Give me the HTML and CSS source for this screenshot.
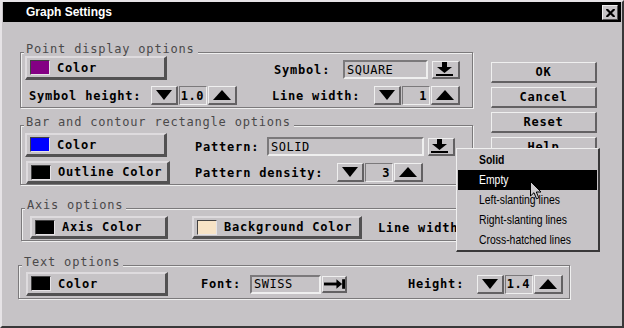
FILE: index.html
```html
<!DOCTYPE html>
<html lang="en">
<head>
    <meta charset="UTF-8">
    <meta name="viewport" content="width=device-width, initial-scale=1.0">
    <title>Graph Settings</title>
    <link rel="stylesheet" href="styles.css">
</head>
<body>
    <div class="window">
        <div class="titlebar">
            <span class="title">Graph Settings</span>
            <button class="close-btn">
                <svg width="9" height="8" viewBox="0 0 9 8"><path d="M0.5 0 L8.5 8 M8.5 0 L0.5 8" stroke="#000" stroke-width="2.2"/></svg>
            </button>
        </div>

        <div class="content">
            <!-- Point display -->
            <div class="group group-point">
                <span class="group-title">Point display options</span>
                <div class="point-grid">
                    <button class="color-btn"><span class="swatch purple"></span>Color</button>
                    <div class="cell cell-low">
                        <span class="lbl lbl-symbol">Symbol:</span>
                        <div class="field field-symbol">SQUARE</div>
                        <button class="icon-btn dd-btn">
                            <svg width="17" height="14" viewBox="0 0 17 14"><rect x="6" y="0" width="5" height="5"/><polygon points="1,5 16,5 8.5,11"/><rect x="0" y="12" width="17" height="2"/></svg>
                        </button>
                    </div>
                    <div class="cell">
                        <span class="lbl lbl-height">Symbol height:</span>
                        <div class="spin">
                            <button class="spin-btn"><span class="tri-down"></span></button>
                            <div class="spin-val">1.0</div>
                            <button class="spin-btn spin-up"><span class="tri-up"></span></button>
                        </div>
                    </div>
                    <div class="cell">
                        <span class="lbl lbl-width">Line width:</span>
                        <div class="spin">
                            <button class="spin-btn"><span class="tri-down"></span></button>
                            <div class="spin-val">1</div>
                            <button class="spin-btn spin-up"><span class="tri-up"></span></button>
                        </div>
                    </div>
                </div>
            </div>

            <!-- Bar and contour -->
            <div class="group group-bar">
                <span class="group-title">Bar and contour rectangle options</span>
                <div class="bar-grid">
                    <button class="color-btn"><span class="swatch blue"></span>Color</button>
                    <div class="cell cell-low">
                        <span class="lbl lbl-pattern">Pattern:</span>
                        <div class="field field-pattern">SOLID</div>
                        <button class="icon-btn dd-btn">
                            <svg width="17" height="14" viewBox="0 0 17 14"><rect x="6" y="0" width="5" height="5"/><polygon points="1,5 16,5 8.5,11"/><rect x="0" y="12" width="17" height="2"/></svg>
                        </button>
                    </div>
                    <button class="color-btn outline-btn"><span class="swatch black"></span>Outline Color</button>
                    <div class="cell">
                        <span class="lbl lbl-density">Pattern density:</span>
                        <div class="spin">
                            <button class="spin-btn"><span class="tri-down"></span></button>
                            <div class="spin-val">3</div>
                            <button class="spin-btn spin-up"><span class="tri-up"></span></button>
                        </div>
                    </div>
                </div>
            </div>

            <div class="actions">
                <button class="action-btn">OK</button>
                <button class="action-btn">Cancel</button>
                <button class="action-btn">Reset</button>
                <button class="action-btn">Help</button>
            </div>

            <!-- Axis -->
            <div class="group group-axis">
                <span class="group-title">Axis options</span>
                <div class="cell">
                    <button class="color-btn axis-btn"><span class="swatch black"></span>Axis Color</button>
                    <button class="color-btn bg-btn"><span class="swatch cream"></span>Background Color</button>
                    <span class="lbl lbl-axis-width">Line width:</span>
                </div>
            </div>

            <!-- Text -->
            <div class="group group-text">
                <span class="group-title">Text options</span>
                <div class="cell">
                    <button class="color-btn"><span class="swatch black"></span>Color</button>
                    <span class="lbl lbl-font">Font:</span>
                    <div class="field field-font">SWISS</div>
                    <button class="icon-btn arrow-btn">
                        <svg width="22" height="10" viewBox="0 0 22 10"><rect x="0" y="3.5" width="14" height="3"/><polygon points="13,0 19,5 13,10"/><rect x="19" y="0" width="3" height="10"/></svg>
                    </button>
                    <span class="lbl lbl-text-height">Height:</span>
                    <div class="spin">
                        <button class="spin-btn"><span class="tri-down"></span></button>
                        <div class="spin-val">1.4</div>
                        <button class="spin-btn spin-up"><span class="tri-up"></span></button>
                    </div>
                </div>
            </div>
        </div>

        <ul class="menu">
            <li class="bold"><span>Solid</span></li>
            <li class="active"><span>Empty</span></li>
            <li><span>Left-slanting lines</span></li>
            <li><span>Right-slanting lines</span></li>
            <li><span>Cross-hatched lines</span></li>
        </ul>

        <svg class="pointer" width="12" height="19" viewBox="0 0 12 19">
            <path d="M0.5 0.5 L0.5 15 L4 11.7 L6.6 17.8 L8.8 16.8 L6.3 11 L11 11 Z" fill="#cecbce" stroke="#000" stroke-width="1"/>
        </svg>
    </div>
</body>
</html>
```

FILE: styles.css
```css
* {
    margin: 0;
    padding: 0;
    box-sizing: border-box;
}

body {
    width: 624px;
    height: 328px;
    overflow: hidden;
    background-color: #c6c3c6;
    font-family: 'DejaVu Sans Mono', 'Liberation Mono', monospace;
    font-size: 12px;
    color: #000;
}

button {
    font: inherit;
    color: inherit;
    background-color: #c6c3c6;
    cursor: default;
}

.window {
    position: relative;
    width: 624px;
    height: 328px;
    border: 2px solid;
    border-color: #e6e3e6 #393839 #393839 #e6e3e6;
    padding: 0 1px;
}

/* Title bar */
.titlebar {
    height: 20px;
    background-color: #000;
    display: flex;
    align-items: center;
    justify-content: space-between;
    padding: 0 3px 0 23px;
}

.title {
    color: #fff;
    font-family: 'Liberation Sans', Arial, sans-serif;
    font-weight: bold;
    font-size: 12px;
}

.close-btn {
    width: 16px;
    height: 15px;
    margin-top: 1px;
    border: 1px solid;
    border-color: #efefef #525152 #525152 #efefef;
    display: flex;
    align-items: center;
    justify-content: center;
}

/* Layout */
.content {
    display: grid;
    grid-template-columns: 453px 106px;
    column-gap: 18px;
    align-items: start;
    padding: 30px 0 0 17px;
}

.group {
    position: relative;
    border: 1px solid #7b797b;
    box-shadow: inset 1px 1px 0 #efefef, 1px 1px 0 #efefef;
}

.group-title {
    position: absolute;
    top: -11px;
    left: 3px;
    padding: 0 3px 0 2px;
    line-height: 14px;
    background-color: #c6c3c6;
    color: #4a494a;
    letter-spacing: 0.8px;
}

.group-point {
    grid-column: 1;
    grid-row: 1;
    padding: 3px 0 2px 4px;
}

.group-bar {
    grid-column: 1;
    grid-row: 2;
    margin-top: 17px;
    padding: 7px 0 0 4px;
}

.group-axis {
    grid-column: 1 / -1;
    grid-row: 3;
    width: 560px;
    margin: 23px 0 0 1px;
    padding: 7px 0 1px 8px;
}

.group-text {
    grid-column: 1 / -1;
    grid-row: 4;
    width: 552px;
    margin: 24px 0 0 -2px;
    padding: 6px 0 2px 7px;
}

.point-grid {
    display: grid;
    grid-template-columns: 247px 188px;
    row-gap: 6px;
}

.bar-grid {
    display: grid;
    grid-template-columns: 170px 260px;
    row-gap: 4px;
}

.cell {
    display: flex;
    align-items: center;
}

.cell-low {
    align-self: end;
    padding-bottom: 1px;
}

/* Labels */
.lbl {
    font-weight: bold;
    letter-spacing: 0.8px;
    white-space: nowrap;
}

.lbl-symbol { width: 71px; padding-left: 2px; }
.lbl-height { width: 126px; padding-left: 4px; }
.lbl-width { width: 104px; }
.lbl-pattern { width: 75px; }
.lbl-density { width: 142px; }
.lbl-axis-width { margin-left: 16px; }
.lbl-font { margin-left: 33px; width: 49px; }
.lbl-text-height { margin-left: 61px; width: 69px; }

/* Colour buttons */
.color-btn {
    width: 142px;
    height: 24px;
    border-style: solid;
    border-width: 2px 3px 3px 2px;
    border-color: #dedbde #525152 #525152 #dedbde;
    display: flex;
    align-items: center;
    gap: 7px;
    padding-left: 3px;
    font-weight: bold;
    letter-spacing: 0.8px;
    white-space: nowrap;
}

.outline-btn {
    width: 144px;
    height: 23px;
    margin-left: 1px;
}

.axis-btn {
    width: 138px;
    height: 23px;
}

.bg-btn {
    width: 170px;
    height: 23px;
    margin-left: 24px;
}

.swatch {
    width: 20px;
    height: 15px;
    border: 1px solid;
    border-color: #424142 #e6e3e6 #e6e3e6 #424142;
}

.purple { background-color: #840084; }
.blue { background-color: #0000ff; }
.black { background-color: #000; }
.cream { background-color: #f7e3c6; }

/* Text fields */
.field {
    height: 19px;
    border: 2px solid;
    border-color: #7b797b #efefef #efefef #7b797b;
    padding: 0 2px;
    display: flex;
    align-items: center;
    letter-spacing: 0.5px;
}

.field-symbol { width: 85px; }
.field-pattern { width: 163px; }
.field-font { width: 71px; }

.icon-btn {
    height: 18px;
    border-style: solid;
    border-width: 1px 2px 2px 1px;
    border-color: #efefef #636163 #636163 #efefef;
    display: flex;
    align-items: center;
    justify-content: center;
}

.dd-btn {
    width: 28px;
    margin-left: 4px;
    padding-right: 3px;
}

.arrow-btn {
    width: 25px;
    height: 17px;
    margin-left: 1px;
    justify-content: flex-start;
    padding-left: 1px;
}

/* Spinners */
.spin {
    display: flex;
    gap: 1px;
    height: 19px;
}

.spin-btn {
    width: 27px;
    border-style: solid;
    border-width: 1px 2px 2px 1px;
    border-color: #efefef #636163 #636163 #efefef;
    display: flex;
    align-items: center;
    justify-content: center;
}

.spin-up {
    width: 29px;
}

.spin-val {
    width: 28px;
    border: 1px solid;
    border-color: #7b797b #efefef #efefef #7b797b;
    display: flex;
    align-items: center;
    justify-content: flex-end;
    padding-right: 2px;
    font-weight: bold;
    letter-spacing: 0.5px;
}

.tri-down {
    border-left: 8px solid transparent;
    border-right: 8px solid transparent;
    border-top: 10px solid #000;
}

.tri-up {
    border-left: 9px solid transparent;
    border-right: 9px solid transparent;
    border-bottom: 10px solid #000;
}

/* Action buttons */
.actions {
    grid-column: 2;
    grid-row: 1 / 3;
    margin-top: 10px;
    display: flex;
    flex-direction: column;
    gap: 4px;
}

.action-btn {
    height: 21px;
    border-style: solid;
    border-width: 1px 2px 2px 1px;
    border-color: #efefef #636163 #636163 #efefef;
    font-weight: bold;
    letter-spacing: 0.8px;
}

/* Popup menu */
.menu {
    position: absolute;
    left: 454px;
    top: 146px;
    width: 144px;
    list-style: none;
    border-style: solid;
    border-width: 1px 2px 2px 1px;
    border-color: #efefef #393839 #393839 #efefef;
    padding: 1px 1px 0 1px;
    background-color: #c6c3c6;
    font-family: 'Liberation Sans', Arial, sans-serif;
    font-size: 13px;
}

.menu li {
    height: 20px;
    line-height: 20px;
    padding-left: 21px;
    white-space: nowrap;
}

/* narrow face: squeeze the regular one */
.menu li span {
    display: inline-block;
    transform: scaleX(0.8);
    transform-origin: left center;
}

.menu .bold {
    font-weight: bold;
}

.menu .active {
    background-color: #000;
    color: #fff;
}

.pointer {
    position: absolute;
    left: 528px;
    top: 179px;
}
```
